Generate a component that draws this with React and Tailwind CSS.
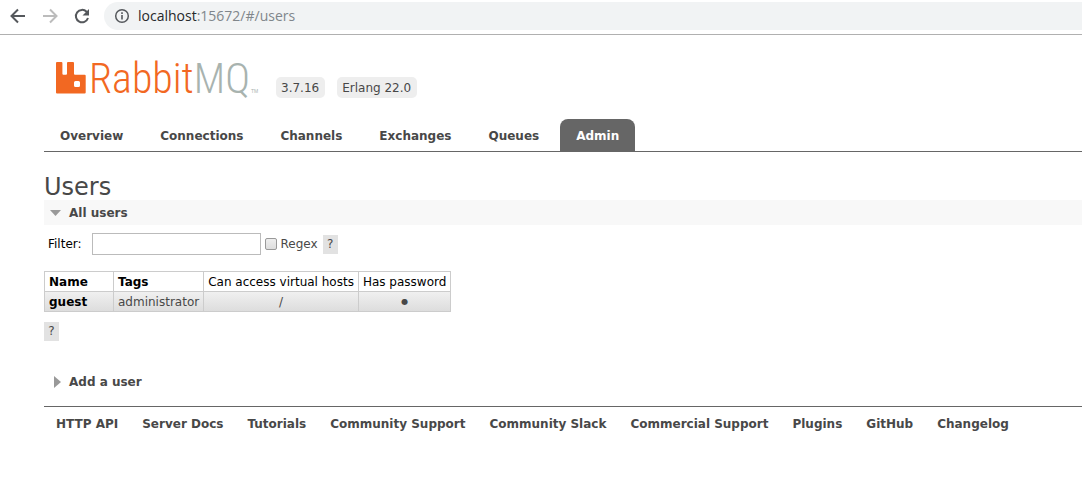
import React from "react";

const tabs = ["Overview", "Connections", "Channels", "Exchanges", "Queues", "Admin"];
const links = [
  "HTTP API",
  "Server Docs",
  "Tutorials",
  "Community Support",
  "Community Slack",
  "Commercial Support",
  "Plugins",
  "GitHub",
  "Changelog",
];

function BrowserBar() {
  return (
    <div className="flex h-[35px] items-start gap-4 border-b border-[#b0b0b0] pl-[10px] font-['Open_Sans',sans-serif]">
      <button type="button" aria-label="Back" className="mt-2 h-4 w-4 text-[#55585c]">
        <svg viewBox="0 0 16 16" className="h-4 w-4" fill="none" stroke="currentColor" strokeWidth="2">
          <path d="M15 8H2.500M8 1.500 1.500 8 8 14.500" />
        </svg>
      </button>
      <button type="button" aria-label="Forward" className="mt-2 h-4 w-4 text-[#bcbcbc]">
        <svg viewBox="0 0 16 16" className="h-4 w-4" fill="none" stroke="currentColor" strokeWidth="2">
          <path d="M1 8h12.500M8 1.500 14.500 8 8 14.500" />
        </svg>
      </button>
      <button type="button" aria-label="Reload" className="mt-2 h-4 w-4 text-[#55585c]">
        <svg viewBox="0 0 16 16" className="h-4 w-4" fill="none" stroke="currentColor" strokeWidth="2">
          <path d="M14 10A6.200 6.200 0 1 1 12.600 3.800L14 5.200" />
          <path d="M15 1v6.500H8.500z" fill="currentColor" stroke="none" />
        </svg>
      </button>
      <div className="-ml-0.5 mt-0.5 flex h-7 flex-1 items-center gap-2 rounded-l-full bg-[#f1f3f4] pl-[10px]">
        <svg viewBox="0 0 16 16" className="h-4 w-4 text-[#55585c]" fill="none" stroke="currentColor">
          <circle cx="8" cy="8" r="6.300" strokeWidth="1.500" />
          <path d="M8 7v4.500M8 4.300v1.600" strokeWidth="1.600" />
        </svg>
        <span className="text-[14px] leading-5 text-[#26282b]">
          localhost<span className="text-[#80868b]">:15672/#/users</span>
        </span>
      </div>
    </div>
  );
}

function Logo() {
  return (
    <svg viewBox="0 0 208 44" className="h-11 w-[208px] overflow-visible" role="img" aria-label="RabbitMQ">
      <path
        fill="#f26822"
        fillRule="evenodd"
        d="M1 7h4.400q1 0 1 1v10.800q0 1 1 1h2.600q1 0 1-1V8q0-1 1-1h5q1 0 1 1v10.800q0 1 1 1h9.700q1 0 1 1V37.500q0 1-1 1H1q-1 0-1-1V8q0-1 1-1zM19.500 26q-1.500 0-1.500 1.500v3q0 1.500 1.500 1.500h3q1.500 0 1.500-1.500v-3q0-1.500-1.500-1.500z"
      />
      <text
        x="33"
        y="38"
        fontSize="42"
        fontWeight="300"
        fontFamily="'Roboto Condensed Light', 'Roboto Condensed', 'Open Sans Condensed', sans-serif"
        fill="#f26822"
      >
        Rabbit<tspan fill="#a8b3af">MQ</tspan>
      </text>
      <text x="195" y="38" fontSize="5" fontFamily="Liberation Sans, sans-serif" fill="#a8b3af">
        TM
      </text>
    </svg>
  );
}

function Help() {
  return (
    <button type="button" aria-label="Help" className="h-[19px] w-[15px] bg-[#e2e2e2] text-center text-[12px] leading-[19px] text-[#484848]">
      ?
    </button>
  );
}

export default function App() {
  return (
    <div className="bg-white font-['DejaVu_Sans',sans-serif] text-[12px] leading-4 text-[#484848]">
      <BrowserBar />
      <div className="ml-11">
        <header className="pt-5">
          <div className="flex items-start gap-3 pl-3">
            <a href="#/"><Logo /></a>
            <span className="mt-[22px] h-[21px] rounded-[5px] bg-[#eee] pr-1.5 pl-[5px] leading-[22px]">3.7.16</span>
            <span className="mt-[22px] h-[21px] rounded-[5px] bg-[#eee] pr-1.5 pl-[5px] leading-[22px]">Erlang 22.0</span>
          </div>
          <nav className="mt-5 flex gap-[5px] border-b border-[#666] font-bold">
            {tabs.map((t) => (
              <a
                key={t}
                href="#/users"
                className={
                  t === "Admin"
                    ? "rounded-t-lg bg-[#666] px-4 pt-[9px] pb-[7px] text-white"
                    : "px-4 pt-[9px] pb-[7px]"
                }
              >
                {t}
              </a>
            ))}
          </nav>
        </header>
        <main>
          <h1 className="mt-[22px] text-[24px] leading-[26px]">Users</h1>
          <h2 className="flex h-[25px] items-center gap-2 bg-[#f8f8f8] pl-[6px] font-bold">
            <svg viewBox="0 0 11 6" className="h-[6px] w-[11px]" fill="#999"><path d="M0 0h11L5.500 6z" /></svg>
            All users
          </h2>
          <div className="mt-2 flex items-center pl-1">
            <label htmlFor="filter" className="text-black">Filter:</label>
            <input id="filter" type="text" className="ml-[10px] h-[22px] w-[169px] border border-[#bbb] bg-white px-1" />
            <input
              id="regex"
              type="checkbox"
              className="ml-1 h-3 w-3 appearance-none rounded-[2px] border border-[#999] bg-linear-to-b from-[#eee] to-[#ddd]"
            />
            <label htmlFor="regex" className="mr-[5px] ml-1">Regex</label>
            <Help />
          </div>
          <table className="mt-4 border-collapse">
            <thead>
              <tr className="text-black">
                <th className="h-5 min-w-[69px] border border-[#ccc] px-1 py-0 text-left font-bold">Name</th>
                <th className="border border-[#ccc] px-1 text-left font-bold">Tags</th>
                <th className="border border-[#ccc] px-1 font-normal">Can access virtual hosts</th>
                <th className="border border-[#ccc] px-1 font-normal">Has password</th>
              </tr>
            </thead>
            <tbody>
              <tr className="bg-linear-to-b from-[#f0f0f0] to-[#dcdcdc]">
                <td className="h-5 border border-[#ccc] px-1 font-bold text-black">
                  <a href="#/users/guest">guest</a>
                </td>
                <td className="border border-[#ccc] px-1">administrator</td>
                <td className="border border-[#ccc] px-1 text-center">/</td>
                <td className="border border-[#ccc] px-1 text-center text-[8px]">●</td>
              </tr>
            </tbody>
          </table>
          <div className="mt-[10px] flex"><Help /></div>
          <h2 className="mt-7 flex h-[25px] items-center gap-2 pl-[10px] font-bold">
            <svg viewBox="0 0 7 12" className="h-3 w-[7px]" fill="#999"><path d="M0 0v12L7 6z" /></svg>
            Add a user
          </h2>
        </main>
        <footer className="mt-3 flex gap-6 border-t border-[#666] pt-[9px] pl-3 font-bold whitespace-nowrap">
          {links.map((l) => (
            <a key={l} href="#/users">{l}</a>
          ))}
        </footer>
      </div>
    </div>
  );
}
